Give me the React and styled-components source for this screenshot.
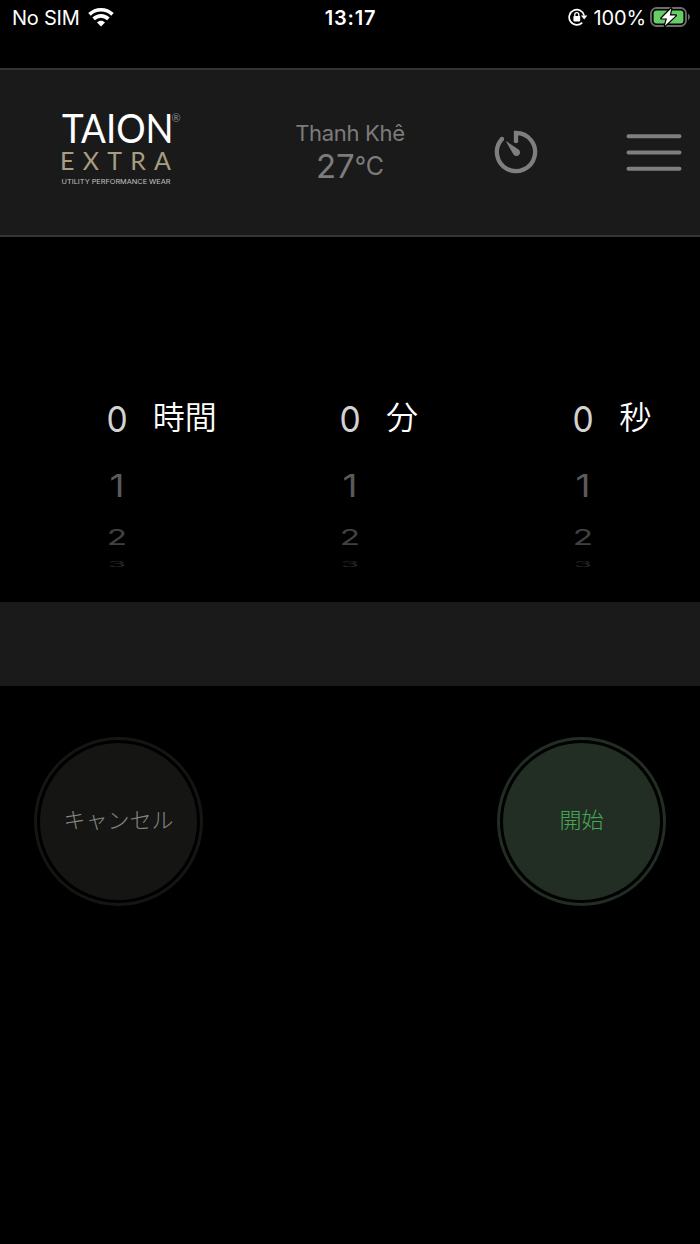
import React from 'react';
import styled, { createGlobalStyle } from 'styled-components';

const GlobalStyle = createGlobalStyle`
  * {
    box-sizing: border-box;
  }

  body {
    margin: 0;
    background: #000;
    font-family: Inter, "Noto Sans CJK JP", sans-serif;
  }
`;

const Screen = styled.div`
  width: 700px;
  height: 1244px;
  background: #000;
  overflow: hidden;
`;

const StatusBar = styled.div`
  display: grid;
  grid-template-columns: 1fr auto 1fr;
  align-items: center;
  height: 68px;
  padding: 0 9px 33px 12px;
  color: #fff;
  font-size: 20px;
  line-height: 24px;

  svg {
    margin-bottom: 1px;
  }
`;

const StatusGroup = styled.div`
  display: flex;
  align-items: center;
  justify-content: ${({ $end }) => ($end ? 'flex-end' : 'flex-start')};
  gap: ${({ $gap }) => $gap}px;
`;

const Carrier = styled.span`
  letter-spacing: -0.25px;
`;

const Clock = styled.span`
  padding-right: 2px;
  font-weight: 600;
  letter-spacing: 0.8px;
`;

const Percent = styled.span`
  letter-spacing: -0.1px;
  margin-right: -1px;
`;

const Header = styled.header`
  display: grid;
  grid-template-columns: 233px 234px 98px 1fr;
  align-items: center;
  height: 169px;
  background: #1a1a1a;
  border-top: 2px solid #343434;
  border-bottom: 2px solid #343434;
`;

const LogoSlot = styled.div`
  padding: 0 0 10px 58px;

  svg {
    display: block;
    overflow: visible;
  }
`;

const Weather = styled.div`
  display: flex;
  flex-direction: column;
  align-items: center;
  padding-bottom: 2px;
  color: #7c7c7c;
`;

const City = styled.div`
  font-size: 22px;
  line-height: 28px;
  letter-spacing: -0.3px;
`;

const Temperature = styled.div`
  display: flex;
  align-items: center;
  font-size: 33px;
  line-height: 38px;

  small {
    font-size: 25px;
  }
`;

const IconSlot = styled.div`
  display: flex;
  justify-content: ${({ $align }) => $align};
  padding-right: ${({ $right }) => $right || 0}px;
  padding-bottom: 1px;
`;

const Picker = styled.section`
  display: grid;
  grid-template-columns: repeat(3, 1fr);
  height: 365px;
  padding-top: 161px;
`;

const Wheel = styled.div`
  display: grid;
  grid-template-columns: 1fr 24px 1fr;
  align-content: start;
`;

const Digit = styled.div`
  grid-column: 2;
  height: ${({ $height }) => $height}px;
  display: flex;
  align-items: center;
  justify-content: center;
  font-size: 35px;
  font-weight: 400;
  line-height: 1;
  color: ${({ $color }) => $color};
  transform: scale(${({ $scaleX }) => $scaleX}, ${({ $scaleY }) => $scaleY});
`;

const Unit = styled.div`
  grid-column: 3;
  grid-row: 1;
  padding-left: 24px;
  font-family: "Noto Sans CJK JP", sans-serif;
  font-size: 32px;
  font-weight: 350;
  line-height: 35px;
  color: #fff;
  white-space: nowrap;
`;

const Band = styled.div`
  height: 84px;
  background: #1a1a1a;
`;

const Actions = styled.div`
  display: flex;
  justify-content: space-between;
  padding: 51px 34px 0;
`;

const RoundButton = styled.button`
  width: 169px;
  height: 169px;
  padding: 3px;
  border: 3px solid ${({ $fill }) => $fill};
  border-radius: 50%;
  background: ${({ $fill }) => $fill} content-box;
  color: ${({ $color }) => $color};
  font-family: "Noto Sans CJK JP", sans-serif;
  font-size: 22px;
  font-weight: 300;
  line-height: 32px;

  span {
    display: block;
    padding-bottom: 7px;
  }
`;

const rows = [
  { value: 0, height: 42, scaleX: 0.96, scaleY: 1.02, color: '#d2d2d2' },
  { value: 1, height: 90, scaleX: 1.05, scaleY: 0.89, color: '#5a5a5a' },
  { value: 2, height: 14, scaleX: 0.95, scaleY: 0.6, color: '#414141' },
  { value: 3, height: 40, scaleX: 0.85, scaleY: 0.2, color: '#262626' },
];

const units = ['時間', '分', '秒'];

function WifiIcon() {
  return (
    <svg width="26" height="20" viewBox="0 0 26 20" fill="none" stroke="#fff" strokeWidth="3.7">
      <path d="M1.5 7.4C8 1.2 18 1.2 24.5 7.4" />
      <path d="M5.6 11.9C10 7.8 16 7.8 20.4 11.9" />
      <path d="M13 19.4L9 15.4C11.4 13.2 14.6 13.2 17 15.4Z" fill="#fff" stroke="none" />
    </svg>
  );
}

function RotationLockIcon() {
  return (
    <svg width="20" height="18" viewBox="0 0 20 18" fill="none">
      <path d="M14.2 14.6A7.6 7.6 0 1 1 16.2 7.6" stroke="#fff" strokeWidth="1.7" />
      <path d="M12.9 7.6H19.3L16.2 11.4Z" fill="#fff" />
      <rect x="5.4" y="8" width="6.8" height="5.4" rx="0.8" fill="#fff" />
      <path d="M6.8 8.4V6.6a2 2 0 0 1 4 0v1.8" stroke="#fff" strokeWidth="1.3" />
    </svg>
  );
}

function BatteryIcon() {
  return (
    <svg width="41" height="20" viewBox="0 0 41 20">
      <rect x="1" y="1" width="35" height="18" rx="5.5" fill="none" stroke="#6d6d6d" strokeWidth="1.8" />
      <rect x="3.6" y="3.6" width="29.8" height="12.8" rx="3" fill="#65cf65" />
      <path d="M38 6.8C40.4 8 40.4 12 38 13.2Z" fill="#6d6d6d" />
      <path
        d="M21.2 1.4L11.4 11.4H17L14.9 18.8L25.8 8.4H19.8Z"
        fill="#fff"
        stroke="#000"
        strokeWidth="2.4"
        strokeLinejoin="round"
        paintOrder="stroke"
      />
    </svg>
  );
}

function Logo() {
  return (
    <svg width="126" height="76" viewBox="0 0 126 76">
      <g fontFamily="Lato, sans-serif">
        <text x="4" y="33" fontSize="41" fill="#fff" textLength="111.5" lengthAdjust="spacingAndGlyphs">
          TAION
        </text>
        <text x="113.5" y="11.5" fontSize="11" fill="#8a8a8a">®</text>
        <text x="2" y="60.4" fontSize="25" fill="#a89d80" textLength="111">EXTRA</text>
      </g>
      <text
        x="3.5"
        y="74.2"
        fontFamily="Inter, sans-serif"
        fontSize="6.8"
        fill="#c4c4c4"
        textLength="109"
        lengthAdjust="spacingAndGlyphs"
      >
        UTILITY PERFORMANCE WEAR
      </text>
    </svg>
  );
}

function TimerIcon() {
  return (
    <svg width="44" height="44" viewBox="0 0 44 44" fill="none">
      <path d="M22 11.2V2.9A19.1 19.1 0 1 1 8 9" stroke="#7f7f7f" strokeWidth="4.3" />
      <circle cx="22" cy="11.2" r="2.15" fill="#7f7f7f" />
      <circle cx="8" cy="9" r="2.15" fill="#7f7f7f" />
      <path
        d="M12.3 12.1Q11.6 11.2 12.8 11.6L24.2 19.3A3.6 3.6 0 1 1 19.3 24.2Z"
        fill="#7f7f7f"
      />
    </svg>
  );
}

function MenuIcon() {
  return (
    <svg width="56" height="38" viewBox="0 0 56 38" stroke="#7f7f7f" strokeWidth="4" strokeLinecap="round">
      <path d="M2.5 3.3H53.5M2.5 19.5H53.5M2.5 35.7H53.5" />
    </svg>
  );
}

function TimeWheel({ unit }) {
  return (
    <Wheel>
      {rows.map((row) => (
        <Digit
          key={row.value}
          $height={row.height}
          $scaleX={row.scaleX}
          $scaleY={row.scaleY}
          $color={row.color}
        >
          {row.value}
        </Digit>
      ))}
      <Unit>{unit}</Unit>
    </Wheel>
  );
}

function App() {
  return (
    <Screen>
      <GlobalStyle />
      <StatusBar>
        <StatusGroup $gap={9}>
          <Carrier>No SIM</Carrier>
          <WifiIcon />
        </StatusGroup>
        <Clock>13:17</Clock>
        <StatusGroup $gap={5} $end>
          <RotationLockIcon />
          <Percent>100%</Percent>
          <BatteryIcon />
        </StatusGroup>
      </StatusBar>
      <Header>
        <LogoSlot>
          <Logo />
        </LogoSlot>
        <Weather>
          <City>Thanh Khê</City>
          <Temperature>
            27<small>°C</small>
          </Temperature>
        </Weather>
        <IconSlot $align="center">
          <TimerIcon />
        </IconSlot>
        <IconSlot $align="flex-end" $right={18}>
          <MenuIcon />
        </IconSlot>
      </Header>
      <Picker>
        {units.map((unit) => (
          <TimeWheel key={unit} unit={unit} />
        ))}
      </Picker>
      <Band />
      <Actions>
        <RoundButton $fill="#151513" $color="#858585">
          <span>キャンセル</span>
        </RoundButton>
        <RoundButton $fill="#222d23" $color="#4aa657">
          <span>開始</span>
        </RoundButton>
      </Actions>
    </Screen>
  );
}

export default App;
